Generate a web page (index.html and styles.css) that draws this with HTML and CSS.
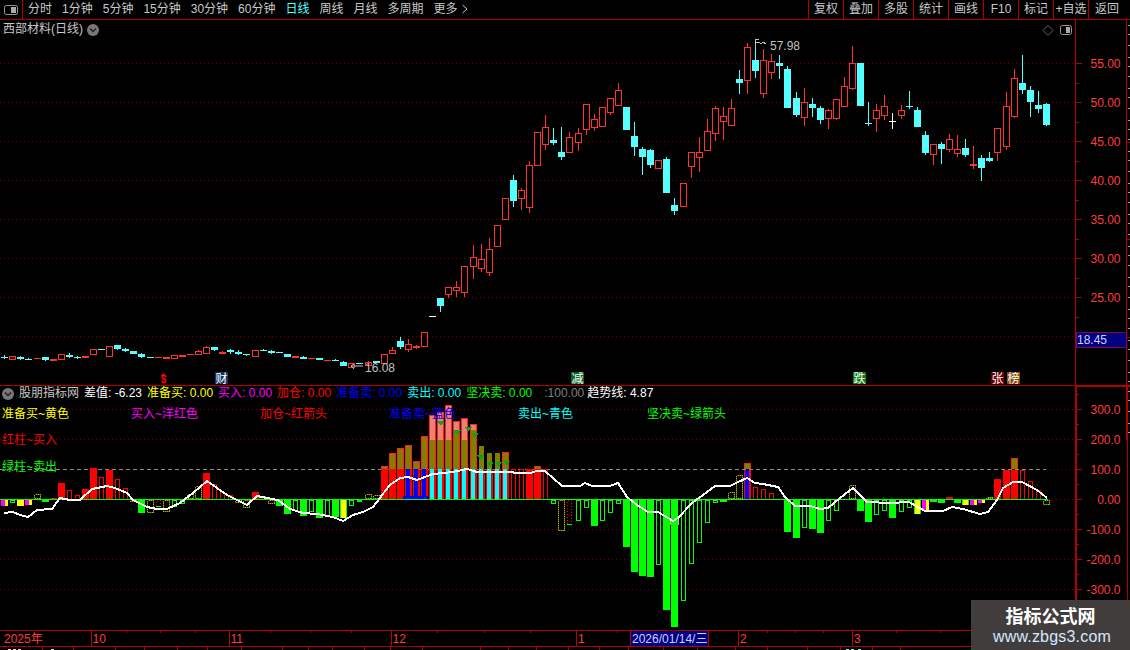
FILE: index.html

```html
<!DOCTYPE html>
<html lang="zh-CN">
<head>
<meta charset="UTF-8">
<title>西部材料(日线)</title>
<link rel="stylesheet" href="styles.css">
</head>
<body>

<!-- 顶部工具条 -->
<div class="toolbar">
  <div class="panel-btn">
    <svg width="14" height="10" viewBox="0 0 14 10"><rect x="0.5" y="0.5" width="13" height="9" rx="2" fill="none" stroke="#999"/><rect x="7" y="2" width="5" height="6" fill="#aaa"/></svg>
  </div>
  <div class="periods">
    <span>分时</span><span>1分钟</span><span>5分钟</span><span>15分钟</span><span>30分钟</span><span>60分钟</span>
    <span class="active">日线</span><span>周线</span><span>月线</span><span>多周期</span>
    <span>更多 <svg class="more" width="6" height="10" viewBox="0 0 6 10"><path d="M0.5 1l4.5 4-4.5 4" fill="none" stroke="#c8c8c8"/></svg></span>
  </div>
  <div class="tools">
    <div class="tool">复权</div><div class="tool">叠加</div><div class="tool">多股</div><div class="tool">统计</div><div class="tool">画线</div><div class="tool">F10</div><div class="tool">标记</div><div class="tool">+自选</div><div class="tool">返回</div>
  </div>
</div>

<!-- K线 -->
<div class="pane price-pane">
  <div class="plot">
    <div class="title">西部材料(日线)
      <svg width="12" height="12" viewBox="0 0 12 12"><circle cx="6" cy="6" r="6" fill="#777"/><path d="M3 4.5l3 3 3-3" fill="none" stroke="#222" stroke-width="1.5"/></svg>
    </div>
    <svg id="priceChart" class="layer" viewBox="0 20 1075 365"></svg>
  </div>
  <svg id="priceAxis" class="axis" viewBox="1076 20 54 365"></svg>
</div>

<!-- 副图指标 -->
<div class="pane ind-pane">
  <div class="plot">
    <div class="legend">
      <svg class="legend-icon" width="12" height="12" viewBox="0 0 12 12"><circle cx="6" cy="6" r="6" fill="#777"/><path d="M3 4.5l3 3 3-3" fill="none" stroke="#222" stroke-width="1.5"/></svg>
      <span class="c-gray">股朋指标网</span>
      <span class="c-white">差值: -6.23</span>
      <span class="c-yellow">准备买: 0.00</span>
      <span class="c-magenta">买入: 0.00</span>
      <span class="c-red">加仓: 0.00</span>
      <span class="c-blue">准备卖: 0.00</span>
      <span class="c-cyan">卖出: 0.00</span>
      <span class="c-green">坚决卖: 0.00</span>
      <span class="c-dim ratio">:100.00</span>
      <span class="c-white trend">趋势线: 4.87</span>
    </div>
    <div class="hints">
      <span class="c-yellow">准备买~黄色</span>
      <span class="c-magenta">买入~洋红色</span>
      <span class="c-red">加仓~红箭头</span>
      <span class="c-blue">准备卖~蓝色</span>
      <span class="c-cyan">卖出~青色</span>
      <span class="c-green">坚决卖~绿箭头</span>
    </div>
    <div class="hint-line c-red">红柱~买入</div>
    <div class="hint-line second c-green">绿柱~卖出</div>
    <svg id="indChart" class="layer" viewBox="0 386 1075 244"></svg>
  </div>
  <svg id="indAxis" class="axis" viewBox="1077 386 53 244"></svg>
</div>

<!-- 时间轴 -->
<svg id="timeBar" class="timebar" viewBox="0 631 1130 15"></svg>
<svg id="lastRow" class="lastrow" viewBox="0 647 1130 3"></svg>

<div class="watermark">
  <div class="wm-name">指标公式网</div>
  <div class="wm-url">www.zbgs3.com</div>
</div>

<script src="chart.js"></script>
</body>
</html>
```

FILE: styles.css

```css
:root{
  --line:#b00000;--red:#ff3232;--cyan:#54ffff;--text:#c8c8c8;
}
html,body{margin:0;padding:0;background:#000;overflow:hidden;}
body{width:1130px;height:650px;position:relative;color:var(--text);font:12px "Liberation Sans","Noto Sans CJK SC",sans-serif;}
svg{display:block;}
svg text{font:12px "Liberation Sans","Noto Sans CJK SC",sans-serif;}

.toolbar{display:flex;height:19px;border-bottom:1px solid var(--line);line-height:19px;}
.panel-btn{width:22px;border-right:1px solid var(--line);display:flex;align-items:center;justify-content:center;}
.periods{display:flex;gap:10px;padding-left:5px;}
.periods .active{color:var(--cyan);}
.periods .more{display:inline-block;vertical-align:-1px;margin-left:1px;}
.tools{display:flex;margin-left:auto;}
.tool{width:34px;border-left:1px solid var(--line);text-align:center;white-space:nowrap;}
.tool:last-child{width:36px;padding-right:5px;}

.pane{display:flex;}
.price-pane{height:365px;border-bottom:1px solid var(--line);}
.ind-pane{height:244px;}
.plot{position:relative;width:1075px;flex:none;border-right:1px solid var(--line);}
.ind-pane .plot{border-right-width:2px;}
.layer{position:absolute;left:0;top:0;width:1075px;height:100%;}
.axis{flex:1;height:100%;}

.title{display:flex;align-items:center;gap:4px;padding:1px 0 0 3px;line-height:17px;}

.legend{display:flex;align-items:baseline;gap:5px;height:16px;line-height:15px;padding-left:2px;white-space:nowrap;}
.legend-icon{align-self:center;}
.legend .ratio{margin-left:7px;}
.legend .trend{margin-left:-2px;}
.hints{position:relative;z-index:1;display:grid;grid-template-columns:repeat(6,129px);height:16px;line-height:16px;padding-left:2px;margin-top:4px;}
.hint-line{height:16px;line-height:16px;padding-left:2px;margin-top:10px;}
.hint-line.second{margin-top:11px;}

.c-white{color:#fff;}
.c-gray{color:#c8c8c8;}
.c-dim{color:#808080;}
.c-yellow{color:#ff0;}
.c-magenta{color:#f0f;}
.c-red{color:#f00;}
.c-blue{color:#00f;}
.c-cyan{color:#0ff;}
.c-green{color:#0f0;}

.timebar{width:1130px;height:15px;border-top:1px solid var(--line);border-bottom:1px solid var(--line);}
.lastrow{width:1130px;height:3px;}

.watermark{position:absolute;right:0;bottom:0;width:159px;height:50px;background:#423d3d;text-align:center;}
.wm-name{color:#fff;font:bold 18px/24px "Noto Sans CJK SC",sans-serif;padding-top:3px;}
.wm-url{color:#d4e8ff;font:16px/19px "Liberation Sans",sans-serif;letter-spacing:.2px;padding-left:3px;}
```

FILE: chart.js

```js
const RED='#ff3232',CYAN='#54ffff',LINE='#b00000',GRID='#780000',LABEL='#ff3c3c';

// [顶,底,上影,下影,类型] r空心红 R实心红 c青 w白
const candles=[
[356.5,357.5,355,359,'c'],[356,359,0,0,'r'],[357,359,356,360,'c'],[359,360,358,0,'c'],[358,359,0,0,'R'],[357,360,0,361,'c'],[359,361,0,0,'R'],[354,359,0,0,'r'],[355,357,353,358,'c'],[357,358,356,359,'c'],
[356,358,0,0,'R'],[349,354,0,0,'r'],[349,350,0,0,'c'],[346,356,0,0,'r'],[345,349,0,350,'c'],[349,351,348,352,'c'],[351,354,0,0,'c'],[354,357,353,358,'c'],[357,358,0,0,'c'],[357,358,0,0,'R'],
[357,359,0,0,'R'],[355,358,0,359,'r'],[355,357,0,0,'R'],[354,355,0,0,'R'],[351,354,350,0,'r'],[347,353,346,0,'r'],[347,350,0,351,'c'],[352,354,351,0,'R'],[350,352,349,354,'c'],[352,354,350,355,'c'],
[354,355,0,356,'c'],[350,356,0,0,'r'],[350,351,349,0,'c'],[351,353,350,354,'c'],[352,353,0,0,'c'],[354,357,0,0,'c'],[356,358,0,0,'R'],[357,359,356,0,'c'],[358,359,0,0,'R'],[358,360,0,0,'c'],
[360,361,0,0,'R'],[360,361,359,0,'c'],[362,366,361,0,'c'],[363,367,0,0,'r'],[363,364,0,0,'c'],[362,365,361,0,'r'],[361,363,0,0,'c'],[354,363,0,0,'r'],[350,353,347,0,'r'],[341,347,337,349,'c'],
[344,349,339,352,'r'],[346,348,345,349,'R'],[332,346,0,0,'r'],[316,317,0,0,'w'],[298,306,0,312,'c'],[287,294,0,298,'r'],[287,290,281,297,'r'],[266,292,0,297,'r'],[257,266,245,279,'r'],[259,268,244,272,'r'],
[249,272,238,276,'r'],[225,246,0,0,'r'],[198,219,0,0,'r'],[180,201,175,207,'c'],[190,198,188,210,'r'],[165,207,161,213,'r'],[132,165,0,0,'r'],[127,144,115,150,'r'],[140,143,128,145,'c'],[152,157,127,160,'c'],
[137,152,132,153,'r'],[133,142,128,151,'r'],[104,129,0,135,'r'],[119,127,114,131,'r'],[107,126,0,127,'r'],[98,112,0,115,'r'],[90,105,83,106,'r'],[107,130,0,0,'c'],[136,147,122,156,'c'],[149,157,147,175,'c'],
[150,165,149,168,'c'],[160,168,0,169,'r'],[159,193,157,0,'c'],[205,211,198,215,'c'],[183,206,0,0,'r'],[152,166,0,178,'r'],[152,157,137,172,'r'],[131,150,119,0,'r'],[108,133,106,141,'r'],[116,121,107,140,'r'],
[108,125,99,0,'r'],[79,83,70,94,'c'],[47,80,43,94,'r'],[60,71,40,78,'c'],[60,93,49,98,'r'],[61,72,54,79,'r'],[63,66,55,79,'c'],[69,108,66,0,'c'],[98,115,92,117,'c'],[102,117,88,126,'r'],
[104,108,98,117,'c'],[108,120,106,124,'c'],[110,118,109,129,'r'],[99,118,0,120,'r'],[86,106,77,0,'r'],[63,88,46,90,'r'],[63,106,0,0,'c'],[123,124,102,126,'c'],[110,118,104,132,'r'],[106,115,95,120,'r'],
[121,122,113,129,'w'],[110,115,105,119,'r'],[106,107,91,109,'c'],[110,127,107,0,'c'],[135,153,131,155,'c'],[144,154,0,165,'r'],[144,149,142,164,'c'],[139,149,134,152,'r'],[149,153,135,157,'r'],[148,155,139,157,'c'],
[164,166,146,169,'R'],[158,168,155,181,'c'],[158,161,152,162,'c'],[128,152,0,161,'r'],[106,146,92,150,'r'],[78,116,69,118,'r'],[83,90,55,94,'c'],[90,102,86,117,'c'],[105,109,91,113,'c'],[104,125,103,126,'c']
];

// 副图柱子(像素高度),正数向上 R实红 r空红 G实绿 g空绿 d点线 e红点线 y黄 Y纯黄 m洋红 b蓝 c青 n无
const bars=[
['m',-6],['g',-3],['Y',-6],['m',-5],['d',5],['G',-2],['R',1.5],['R',16],['r',9],['r',4],
['R',10],['R',31],['r',22],['R',29],['r',20],['r',11],['d',-2],['G',-13],['d',-13],['e',-7],
['d',-12],['g',-7],['g',-4],['d',5],['d',13],['R',26],['r',15],['r',7],['r',4],['d',-3],
['d',-8],['R',7],['r',3],['d',-4],['G',-6],['G',-14],['g',-11],['G',-16],['g',-12],['G',-18],
['g',-17],['G',-17],['y',-18],['g',-6],['g',-2],['d',5],['d',4],['R',30],['R',30],['R',30],
['b',30],['b',30],['b',30],['c',30],['c',30],['c',30],['c',30],['c',30],['c',30],['c',30],
['c',30],['c',30],['c',30],['r',30],['r',30],['R',30],['R',30],['r',30],['g',-4],['d',-31],
['e',-25],['g',-21],['g',-8],['G',-26],['g',-21],['g',-13],['g',-4],['G',-47],['G',-72],['G',-76],
['G',-77],['g',-65],['G',-110],['G',-127],['g',-101],['g',-64],['g',-43],['g',-23],['g',-3],['G',-1.5],
['d',7],['d',24],['b',29],['r',12],['r',10],['r',6],['n',0],['G',-32],['G',-38],['g',-28],
['G',-29],['G',-33],['g',-21],['g',-11],['n',0],['d',14],['G',-11],['G',-22],['g',-15],['g',-11],
['G',-18],['g',-12],['g',-8],['y',-14],['m',-11],['G',-2],['G',-3],['R',2],['G',-3],['y',-5],
['m',-5],['m',-3],['d',2],['R',20],['R',29],['R',29],['r',29],['r',18],['r',9],['d',-5]
];

// 上方橄榄色柱 [k,顶,粉色底(0表示没有),有红边]
const caps=[
[47,466,0,1],[48,453,0,1],[49,448,0,1],[50,445,0,1],[51,461,0,1],[52,436,0,1],[53,415,440,1],[54,412,440,1],[55,405,440,1],
[56,421,430,1],[57,418,440,1],[58,424,430,1],[59,446,0,0],[60,453,0,0],[61,453,0,0],[62,452,0,1],[66,466,0,1],[92,463,0,1],[125,458,0,1]
];

const trend=[
[4,513],[13,512],[20,515],[28,517],[37,510],[52,509],[60,498],[70,500],[80,500],[92,489],[107,486],[115,488],[127,493],[133,500],
[147,507],[157,509],[167,509],[180,503],[193,493],[207,481],[217,488],[227,495],[237,500],[247,505],[257,496],[267,498],[278,500],
[290,509],[303,513],[317,514],[333,517],[343,521],[353,515],[363,512],[373,507],[380,498],[382,495],[390,485],[400,478],[408,477],
[417,480],[425,477],[433,474],[443,473],[453,472],[467,469],[477,472],[487,472],[510,472],[517,473],[530,473],[537,471],[545,471],
[562,486],[580,486],[585,483],[592,486],[610,486],[618,483],[627,497],[637,505],[648,512],[658,512],[673,521],[678,518],[692,503],
[703,495],[707,492],[715,486],[730,486],[738,482],[747,478],[755,483],[763,484],[778,487],[785,497],[795,506],[810,506],[820,509],
[828,508],[840,498],[853,488],[863,498],[867,502],[890,503],[909,502],[925,511],[943,511],[952,507],[963,509],[980,514],[988,512],
[997,500],[1003,488],[1013,482],[1022,482],[1037,490],[1047,498]
];

function xAt(k){return Math.floor(4.7+8.075*k);}
function rect(x,y,w,h,fill){return `<rect x="${x}" y="${y}" width="${w}" height="${h}" fill="${fill}"/>`;}
function box(x,y,w,h,stroke,fill,dash){
  return `<rect x="${x+.5}" y="${y+.5}" width="${w-1}" height="${h-1}" fill="${fill||'#000'}" stroke="${stroke}"${dash?` stroke-dasharray="${dash}"`:''}/>`;
}
function hline(y,x1,x2,color,dash){
  return `<line x1="${x1}" x2="${x2}" y1="${y+.5}" y2="${y+.5}" stroke="${color}"${dash?` stroke-dasharray="${dash}"`:''}/>`;
}
function text(x,y,s,color,anchor,cls){
  return `<text x="${x}" y="${y}" fill="${color}"${anchor?` text-anchor="${anchor}"`:''}${cls?` style="${cls}"`:''}>${s}</text>`;
}
function tag(x,s,bg){
  return rect(x,372,13,12,bg)+text(x+.5,382.5,s,'#fff');
}

function drawPrice(){
  let h='<g shape-rendering="crispEdges">';
  for(let y=63;y<=336;y+=39) h+=hline(y,0,1075,GRID,'1 3');
  candles.forEach((c,k)=>{
    const x=xAt(k),t=c[0],b=c[1],type=c[4];
    const col=type==='c'?CYAN:type==='w'?'#fff':RED;
    const hi=c[2]||t,lo=c[3]||b;
    if(hi<t||lo>b) h+=rect(x,hi,1,lo-hi,col);
    if(type==='r') h+=box(x-3,t,7,b-t+1,RED);
    else h+=rect(x-3,t,7,Math.max(b-t,1),col);
  });
  h+='</g>';
  // 最高价标注
  h+='<path d="M755 47v-8h4M755 42h3l3 1.5 2-1 3 1" fill="none" stroke="#c0c0c0" shape-rendering="crispEdges"/>';
  h+=text(770,50,'57.98','#c0c0c0');
  // 最低价标注
  h+='<path d="M363 366h-12l3-2M351 366l3 3" fill="none" stroke="#c0c0c0"/>';
  h+=text(365,372,'16.08','#c0c0c0');
  // 信号
  h+='<path d="M163.5 373l3 3h-6z" fill="#f00"/>'+text(163.5,383,'$','#f00','middle','font-size:10px;font-weight:bold');
  h+=tag(215,'财','#12365f')+tag(571,'减','#0a6424')+tag(853,'跌','#0d7a0d')+tag(991,'张','#6b0000')+tag(1007,'榜','#8a4a10');
  // 右上图标
  h+='<path d="M1048 25.5l5 5-5 5-5-5z" fill="none" stroke="#666"/>';
  h+='<rect x="1060.5" y="25.5" width="11" height="9" rx="2" fill="none" stroke="#999"/>'+rect(1066,27,4,6,'#aaa');
  document.getElementById('priceChart').innerHTML=h;
}

function drawInd(){
  const Z=499;
  let h='<g shape-rendering="crispEdges">';
  [409,439,529,559,589].forEach(y=>h+=hline(y,0,1075,GRID,'1 3'));
  h+=hline(469,0,1046,'#8a8a8a','4 3')+hline(469,1046,1075,GRID,'1 3');
  h+=hline(Z,1048,1075,GRID,'1 3');
  caps.forEach(c=>{
    const x=xAt(c[0])-3,top=c[1];
    h+=rect(x+1,top,5,469-top,'#808000');
    if(c[2]) h+=rect(x+1,top,5,c[2]-top,'#f08070');
    if(c[3]){h+=rect(x,top,1,469-top,'#ff2020')+rect(x+6,top,1,469-top,'#ff2020')+rect(x,top,7,1,'#ff2020');}
  });
  bars.forEach((b,k)=>{
    const t=b[0],v=Math.abs(b[1]);
    if(t==='n') return;
    const x=xAt(k),up=b[1]>0,y=up?Z-v:Z+1,x7=x-3,x5=x-2;
    if(t==='R') h+=rect(x7,y,7,v,'#f00');
    if(t==='G') h+=rect(x7,y,7,v,'#0f0');
    if(t==='r') h+=box(x5,y,5,v+1,'#f00');
    if(t==='g') h+=box(x5,y,5,v,'#0f0');
    if(t==='d') h+=box(x7,y,7,v,'#f00','none','1 1')+`<rect x="${x7+.5}" y="${y+.5}" width="6" height="${v-1}" fill="none" stroke="#0f0" stroke-dasharray="1 1" stroke-dashoffset="1"/>`;
    if(t==='e') h+=box(x5,y,5,v,'#f00','none','1 2')+rect(x5,y+v-1,5,1,'#0f0');
    if(t==='Y') h+=rect(x7,y,7,v,'#ff0');
    if(t==='y') h+=rect(x7,y,7,v,'#0f0')+rect(x5,y,5,v,'#ff0');
    if(t==='m') h+=rect(x7,y,7,v,'#ff0')+rect(x7,y,4,v,'#f0f');
    if(t==='b') h+=rect(x7,y,7,v,'#f00')+rect(x5,y,4,v,'#00f');
    if(t==='c') h+=rect(x7,y,7,v,'#f00')+rect(x5,y,4,v,'#0ff');
  });
  h+=rect(403,496,25,3,'#00f');
  h+=hline(Z,0,1048,'#0f0');
  // 绿色箭头
  [[213,122],[262,150],[295,140],[315,158],[332,225],[360,245],[385,245],[410,242]].forEach(p=>{
    const x=370+p[0]/3,y=380+p[1]/3;
    h+=`<path d="M${x-4} ${y}h8l-4 5z" fill="#10a020"/>`;
  });
  h+=rect(670,519,1,6,'#ffa040')+rect(678,519,1,6,'#ffa040');
  h+=`<polyline points="${trend.map(p=>p.join(',')).join(' ')}" fill="none" stroke="#fff" stroke-width="2"/>`;
  h+='</g>';
  document.getElementById('indChart').innerHTML=h;
}

function sideMarks(y1,y2){
  let h=rect(1126,y1,1,y2-y1,LINE);
  for(let y=y1+5,i=0;y<y2;y+=9+(i++%3)*1.5) h+=rect(1128,Math.round(y),2,1,'#a0a0a0');
  return h;
}

function drawPriceAxis(){
  let h='<g shape-rendering="crispEdges">';
  for(let y=63,v=55;v>=25;y+=39,v-=5){
    h+=rect(1076,y,6,1,LINE)+rect(1076,y+20,3,1,LINE);
  }
  h+=sideMarks(20,385);
  [142,239,337].forEach(y=>h+=rect(1126,y,4,1,LINE));
  h+='</g>';
  for(let y=63,v=55;v>=25;y+=39,v-=5) h+=text(1120.5,y+5,v.toFixed(2),LABEL,'end');
  h+='<rect x="1076.5" y="332.5" width="50" height="15" fill="#000080" stroke="#8a0050" shape-rendering="crispEdges"/>';
  h+=text(1077,344,'18.45','#d0d0ff');
  document.getElementById('priceAxis').innerHTML=h;
}

function drawIndAxis(){
  const labels=['300.0','200.0','100.0','0.00','-100.0','-200.0','-300.0'];
  let h='<g shape-rendering="crispEdges">'+rect(1077,386,53,1,LINE);
  labels.forEach((s,i)=>{
    const y=409+i*30;
    h+=rect(1077,y,5,1,LINE)+rect(1077,y-15,2,1,LINE);
  });
  h+=rect(1127,386,1,244,LINE)+sideMarks(386,440);
  h+='</g>';
  labels.forEach((s,i)=>h+=text(1120.5,409+i*30+5,s,LABEL,'end'));
  document.getElementById('indAxis').innerHTML=h;
}

function drawTime(){
  let h='<g shape-rendering="crispEdges">';
  [91,229,391,576,738,852].forEach(x=>h+=rect(x,631,1,15,'#c00000'));
  [126,160,195,270,310,351,437,484,530,617,767,795,823,896,940].forEach(x=>h+=rect(x,631,1,2,LINE));
  h+=rect(631,631,77,15,'#000080')+rect(630,631,1,15,'#c00000')+rect(708,631,1,15,'#c00000');
  h+='</g>';
  [[4,'2025年'],[92.5,'10'],[230.5,'11'],[392.5,'12'],[578,'1'],[740,'2'],[854,'3']].forEach(p=>h+=text(p[0],642.5,p[1],LABEL));
  h+=text(632,642.5,'2026/01/14/三','#d0d0ff');
  document.getElementById('timeBar').innerHTML=h;
}

function drawLast(){
  let h='<g shape-rendering="crispEdges">';
  [42,73,115,144,177,207,241,282,308,332,364,390,422,480,508,536,568,599,628,663,697,735,767,807,840,872,900].forEach(x=>h+=rect(x,647,1,3,LINE));
  [[8,'#ddd'],[13,'#ddd'],[18,'#ddd'],[51,'#ddd'],[846,'#54ffff'],[851,'#54ffff'],[858,'#54ffff']].forEach(p=>h+=rect(p[0],649,3,1,p[1]));
  h+='</g>';
  document.getElementById('lastRow').innerHTML=h;
}

drawPrice();drawInd();drawPriceAxis();drawIndAxis();drawTime();drawLast();
```
